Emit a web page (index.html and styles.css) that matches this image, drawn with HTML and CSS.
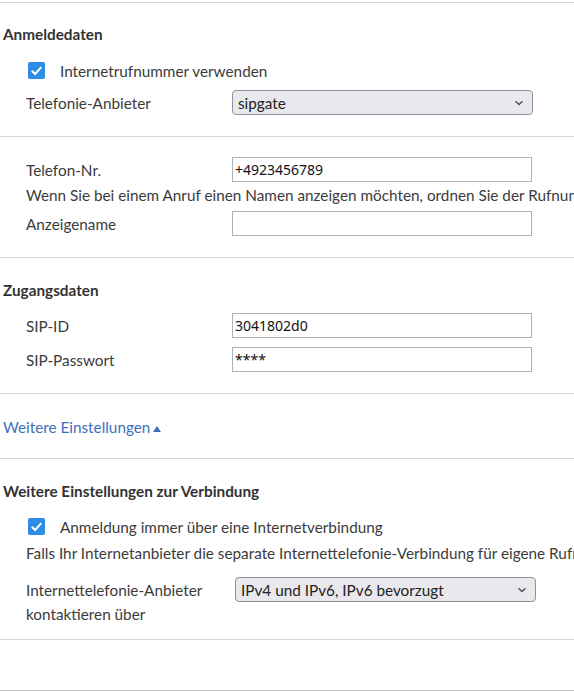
FILE: index.html
```html
<!DOCTYPE html>
<html lang="de">
<head>
<meta charset="UTF-8">
<title>Internetrufnummer</title>
<link rel="stylesheet" href="styles.css">
</head>
<body>
<div class="page">
    <div class="block block-login">
        <h3 class="title">Anmeldedaten</h3>
        <label class="check-row">
            <span class="check">
                <svg width="17" height="17" viewBox="0 0 17 17"><rect x="0" y="0" width="17" height="17" rx="2" fill="#2d8de4"/><polyline points="3.8,8.8 7.1,12 13.3,5.2" fill="none" stroke="#fff" stroke-width="2"/></svg>
            </span>
            <span>Internetrufnummer verwenden</span>
        </label>
        <div class="row">
            <span class="label">Telefonie-Anbieter</span>
            <select class="field sel">
                <option>sipgate</option>
            </select>
        </div>
    </div>

    <div class="block block-number">
        <div class="row">
            <span class="label">Telefon-Nr.</span>
            <input class="field txt" type="text" value="+4923456789">
        </div>
        <p class="hint">Wenn Sie bei einem Anruf einen Namen anzeigen möchten, ordnen Sie der Rufnummer hier einen Namen zu.</p>
        <div class="row">
            <span class="label">Anzeigename</span>
            <input class="field txt" type="text" value="">
        </div>
    </div>

    <div class="block block-access">
        <h3 class="title">Zugangsdaten</h3>
        <div class="row">
            <span class="label">SIP-ID</span>
            <input class="field txt" type="text" value="3041802d0">
        </div>
        <div class="row row-pw">
            <span class="label">SIP-Passwort</span>
            <input class="field txt" type="text" value="****">
        </div>
    </div>

    <div class="block block-more">
        <a class="more" href="#">Weitere Einstellungen<span class="arrow"></span></a>
    </div>

    <div class="block block-conn">
        <h3 class="title">Weitere Einstellungen zur Verbindung</h3>
        <label class="check-row">
            <span class="check">
                <svg width="17" height="17" viewBox="0 0 17 17"><rect x="0" y="0" width="17" height="17" rx="2" fill="#2d8de4"/><polyline points="3.8,8.8 7.1,12 13.3,5.2" fill="none" stroke="#fff" stroke-width="2"/></svg>
            </span>
            <span>Anmeldung immer über eine Internetverbindung</span>
        </label>
        <p class="hint">Falls Ihr Internetanbieter die separate Internettelefonie-Verbindung für eigene Rufnummern nicht unterstützt, aktivieren Sie diese Option.</p>
        <div class="row row-wide">
            <span class="label label-two">Internettelefonie-Anbieter<br>kontaktieren über</span>
            <select class="field sel">
                <option>IPv4 und IPv6, IPv6 bevorzugt</option>
            </select>
        </div>
    </div>

    <div class="block block-empty"></div>
</div>
</body>
</html>
```

FILE: styles.css
```css
*{
    margin:0;
    padding:0;
    box-sizing:border-box;
}
body{
    font-family:Lato,"Noto Sans",sans-serif;
    font-size:15.3px;
    color:#3b3b3b;
    background:#fff;
    overflow:hidden;
}
.page{
    width:574px;
    padding-top:2px;
}
.block{
    border-top:1px solid #d9d9d9;
    display:flex;
    flex-direction:column;
    white-space:nowrap;
}
.block-empty{
    height:52px;
    border-bottom:1px solid #bdbdbd;
}
.title{
    font-size:15.3px;
    font-weight:bold;
    line-height:20px;
    color:#333;
    padding-left:3px;
}
/* Zeilen: Beschriftung links, Eingabefeld rechts */
.row{
    display:flex;
    align-items:center;
    padding-left:26px;
    height:25px;
}
.label{
    width:206px;
    flex:none;
}
.field{
    flex:none;
    height:25px;
}
.txt{
    width:300px;
    border:1px solid #aab4bc;
    font-family:"Noto Sans",sans-serif;
    font-size:14px;
    color:#111;
    padding:0 2px;
    outline:none;
}
/* Auswahlliste mit eigenem Pfeil */
.sel{
    -webkit-appearance:none;
    appearance:none;
    width:301px;
    font-family:Lato,"Noto Sans",sans-serif;
    font-size:15.3px;
    color:#222;
    padding-left:5px;
    border:1px solid #8f8f9d;
    border-radius:4px;
    background:#e9e9ed url("data:image/svg+xml;utf8,<svg xmlns='http://www.w3.org/2000/svg' width='10' height='6' viewBox='0 0 10 6'><polyline points='1.5,1.2 5,4.6 8.5,1.2' fill='none' stroke='%23505050' stroke-width='1.4'/></svg>") no-repeat right 8px center;
}
.check-row{
    display:flex;
    align-items:center;
    height:25px;
    padding-left:28px;
    gap:15px;
}
.check{
    display:flex;
    width:17px;
    height:17px;
}
.hint{
    padding-left:26px;
    line-height:20px;
}

.block-login{
    padding:21px 0 21px;
}
.block-login .check-row{
    margin-top:14px;
}
.block-login .row{
    margin-top:7px;
}

.block-number{
    padding:20px 0 21px;
}
.block-number .hint{
    margin-top:3px;
}
.block-number .hint + .row{
    margin-top:6px;
}

.block-access{
    padding:22px 0 21px;
}
.block-access .row{
    margin-top:13px;
}
.block-access .row-pw{
    margin-top:9px;
}

.block-more{
    padding:23px 0 21px;
}
.more{
    color:#3d6fbd;
    text-decoration:none;
    line-height:20px;
    padding-left:3px;
}
.arrow{
    display:inline-block;
    margin-left:3px;
    border-left:4px solid transparent;
    border-right:4px solid transparent;
    border-bottom:6px solid #3d6fbd;
    vertical-align:1px;
}

.block-conn{
    padding:22px 0 13px;
}
.block-conn .check-row{
    margin-top:13px;
}
.block-conn .hint{
    margin-top:4px;
}
.row-wide{
    height:auto;
    align-items:flex-start;
    margin-top:14px;
}
.row-wide .label{
    width:209px;
    line-height:24px;
}
.label-two{
    margin-top:1px;
}
```
